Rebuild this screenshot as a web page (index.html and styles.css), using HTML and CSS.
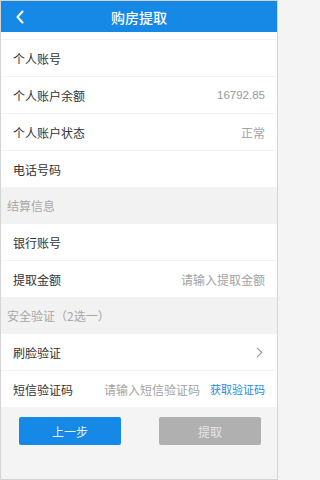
FILE: index.html
```html
<!DOCTYPE html>
<html lang="zh-CN">
<head>
<meta charset="utf-8">
<title>购房提取</title>
<link rel="stylesheet" href="styles.css">
</head>
<body>
<div class="page">
  <header class="topbar">
    <svg class="back" width="10" height="14" viewBox="0 0 10 14"><path d="M7.5 1.5 L2.5 7 L7.5 12.5" fill="none" stroke="#fff" stroke-width="2" stroke-linecap="round" stroke-linejoin="round"/></svg>
    <h1 class="title">购房提取</h1>
  </header>
  <div class="spacer"></div>
  <div class="row"><span class="label">个人账号</span><span class="value"></span></div>
  <div class="row"><span class="label">个人账户余额</span><span class="value num">16792.85</span></div>
  <div class="row"><span class="label">个人账户状态</span><span class="value">正常</span></div>
  <div class="row last"><span class="label">电话号码</span><span class="value"></span></div>
  <div class="section">结算信息</div>
  <div class="row"><span class="label">银行账号</span><span class="value"></span></div>
  <div class="row last"><span class="label">提取金额</span><span class="value">请输入提取金额</span></div>
  <div class="section">安全验证（2选一）</div>
  <div class="row"><span class="label">刷脸验证</span><svg class="chev" width="7" height="11" viewBox="0 0 7 11"><path d="M1 0.8 L5.8 5.5 L1 10.2" fill="none" stroke="#9a9a9a" stroke-width="1.1"/></svg></div>
  <div class="row last"><span class="label">短信验证码</span><span class="sms"><span class="value">请输入短信验证码</span><span class="link">获取验证码</span></span></div>
  <div class="actions">
    <button class="btn primary">上一步</button>
    <button class="btn disabled">提取</button>
  </div>
</div>
</body>
</html>
```
FILE: styles.css
```css
html, body {
  margin: 0;
  padding: 0;
}
body {
  font-family: "Noto Sans CJK SC", "Noto Sans", sans-serif;
  background: #f4f4f4;
}
.page {
  box-sizing: border-box;
  width: 278px;
  height: 480px;
  border: 1px solid #d4d4d4;
  background: #f4f4f4;
  overflow: hidden;
}
.topbar {
  height: 31px;
  background: #1589e5;
  display: flex;
  align-items: center;
  justify-content: center;
  position: relative;
}
.back {
  position: absolute;
  left: 14px;
  top: 9px;
}
.title {
  margin: 0;
  color: #fff;
  font-size: 14px;
  font-weight: 500;
  line-height: 1;
}
.spacer {
  height: 7px;
  background: #fff;
  border-bottom: 1px solid #f3f3f3;
  box-sizing: border-box;
  height: 8px;
}
.row {
  box-sizing: border-box;
  height: 37px;
  background: #fff;
  border-bottom: 1px solid #f3f3f3;
  display: flex;
  align-items: center;
  justify-content: space-between;
  padding: 0 12px 0 12px;
}
.row.last {
  border-bottom: none;
  height: 36px;
}
.label {
  font-size: 12px;
  color: #333;
}
.value {
  font-size: 12px;
  color: #a3a3a3;
}
.value.num {
  font-family: "Liberation Sans", Arial, sans-serif;
  font-size: 11.5px;
  color: #999;
}
.section {
  box-sizing: border-box;
  height: 37px;
  display: flex;
  align-items: center;
  padding-left: 6px;
  font-size: 12px;
  color: #a8a8a8;
  background: #f2f2f2;
}
.chev {
  margin-right: 2px;
}
.sms {
  display: flex;
  align-items: center;
  gap: 10px;
}
.link {
  font-size: 11px;
  color: #1a8ce3;
}
.actions {
  display: flex;
  justify-content: space-between;
  padding: 10px 16px 0 18px;
}
.btn {
  width: 102px;
  height: 28px;
  border: none;
  border-radius: 2px;
  font-family: "Noto Sans CJK SC", sans-serif;
  font-size: 12px;
  padding: 0;
}
.btn.primary {
  background: #1589e5;
  color: #e6f1fb;
}
.btn.disabled {
  background: #b0b0b0;
  color: #e6e6e6;
}
```
